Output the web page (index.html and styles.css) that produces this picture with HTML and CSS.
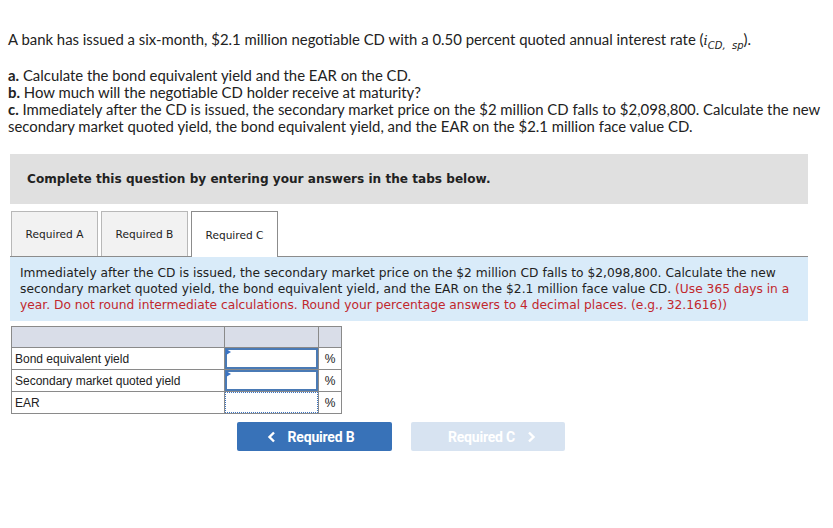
FILE: index.html
```html
<!DOCTYPE html>
<html>
<head>
<meta charset="utf-8">
<link rel="stylesheet" href="styles.css">
</head>
<body>
<div class="question">
  <p class="intro">A bank has issued a six-month, $2.1 million negotiable CD with a 0.50 percent quoted annual interest rate (<span class="sym">i<sub>CD, &nbsp;sp</sub></span>).</p>
  <p class="parts"><b>a.</b> Calculate the bond equivalent yield and the EAR on the CD.<br>
  <b>b.</b> How much will the negotiable CD holder receive at maturity?<br>
  <b>c.</b> Immediately after the CD is issued, the secondary market price on the $2 million CD falls to $2,098,800. Calculate the new secondary market quoted yield, the bond equivalent yield, and the EAR on the $2.1 million face value CD.</p>
</div>

<div class="banner">Complete this question by entering your answers in the tabs below.</div>

<div class="tabs">
  <div class="tab">Required A</div>
  <div class="tab">Required B</div>
  <div class="tab active">Required C</div>
</div>

<div class="panel">
  Immediately after the CD is issued, the secondary market price on the $2 million CD falls to $2,098,800. Calculate the new secondary market quoted yield, the bond equivalent yield, and the EAR on the $2.1 million face value CD. <span class="red">(Use 365 days in a year. Do not round intermediate calculations. Round your percentage answers to 4 decimal places. (e.g., 32.1616))</span>
</div>

<table class="grid">
  <tr class="head"><td class="c1"></td><td class="c2"></td><td class="c3"></td></tr>
  <tr><td class="c1">Bond equivalent yield</td><td class="c2 inp"><div class="box"><span class="flag"></span></div></td><td class="c3">%</td></tr>
  <tr><td class="c1">Secondary market quoted yield</td><td class="c2 inp"><div class="box"><span class="flag"></span></div></td><td class="c3">%</td></tr>
  <tr><td class="c1">EAR</td><td class="c2 inp"><div class="box dotted"></div></td><td class="c3">%</td></tr>
</table>

<div class="nav">
  <div class="btn prev"><svg width="10" height="12" viewBox="0 0 10 12"><path d="M7 1.5 L2.5 6 L7 10.5" fill="none" stroke="#fff" stroke-width="2.4"/></svg><span>Required B</span></div>
  <div class="btn next"><span>Required C</span><svg width="10" height="12" viewBox="0 0 10 12"><path d="M3 1.5 L7.5 6 L3 10.5" fill="none" stroke="#fff" stroke-width="2.4"/></svg></div>
</div>
</body>
</html>
```

FILE: styles.css
```css
body {
  margin: 0;
  background: #fff;
  font-family: "Lato", "Open Sans", sans-serif;
  color: #222;
}
.question {
  padding: 0 0 0 8px;
  font-size: 14.9px;
  line-height: 17px;
}
.question p { margin: 0; }
.intro { padding-top: 31px; }
.sym { font-style: italic; font-family: "DejaVu Serif", serif; font-size: 13px; }
.sym sub { font-size: 10px; font-family: "DejaVu Sans", sans-serif; line-height: 0; }
.parts { margin-top: 18px !important; }
.parts b { font-weight: 700; }

.banner {
  margin: 19px 25px 0 10px;
  height: 50px;
  background: #e0e0e0;
  font-family: "DejaVu Sans", Verdana, sans-serif;
  font-weight: bold;
  font-size: 12.1px;
  color: #222;
  display: flex;
  align-items: center;
  padding-left: 17px;
  box-sizing: border-box;
}

.tabs {
  display: flex;
  gap: 3px;
  margin: 7px 25px 0 11px;
  position: relative;
  z-index: 1;
}
.tab {
  width: 85px;
  height: 44px;
  border: 1px solid #b8b8b8;
  border-bottom: none;
  background: #f2f2f2;
  font-family: "DejaVu Sans", Verdana, sans-serif;
  font-size: 10.6px;
  color: #222;
  display: flex;
  align-items: center;
  justify-content: center;
}
.tab.active {
  background: #fff;
  border-color: #8c8c8c;
  height: 45px;
  margin-bottom: -1px;
}

.panel {
  margin: 0 25px 0 10px;
  border-top: 1px solid #8c8c8c;
  background: #d9ebf9;
  padding: 8px 10px 8px 10px;
  font-family: "DejaVu Sans", Verdana, sans-serif;
  font-size: 12.25px;
  line-height: 16px;
  color: #222;
}
.red { color: #c1272d; }

.grid {
  margin: 5px 0 0 11px;
  border-collapse: collapse;
  font-family: "Liberation Sans", Arial, sans-serif;
  font-size: 12px;
  color: #222;
}
.grid td {
  border: 1px solid #8a8a8a;
  height: 21px;
  padding: 0;
}
.grid .head td { background: #d9dde8; height: 20px; }
.c1 { width: 209px; padding-left: 3px !important; }
.c2 { width: 93px; }
.c3 { width: 22px; text-align: center; }
.inp { position: relative; }
.box {
  position: absolute;
  inset: 0;
  border: 2px solid #4a7ab5;
}
.box.dotted {
  border: 1px dotted #3a74c4;
}
.flag {
  position: absolute;
  left: -1px;
  top: -1px;
  width: 0;
  height: 0;
  border-top: 3px solid transparent;
  border-bottom: 3px solid transparent;
  border-left: 5px solid #3a74c4;
}

.nav {
  display: flex;
  gap: 19px;
  margin: 8px 0 0 237px;
}
.btn {
  width: 155px;
  height: 29px;
  border-radius: 2px;
  display: flex;
  align-items: center;
  justify-content: center;
  gap: 11px;
  font-family: "Roboto", sans-serif;
  font-weight: 700;
  font-size: 14px;
  letter-spacing: -0.2px;
  color: #fff;
}
.prev { background: #3872b8; }
.next { background: #d7e3f1; width: 154px; }
.prev svg { margin-left: -8px; }
.next svg { margin-right: -8px; }
```
